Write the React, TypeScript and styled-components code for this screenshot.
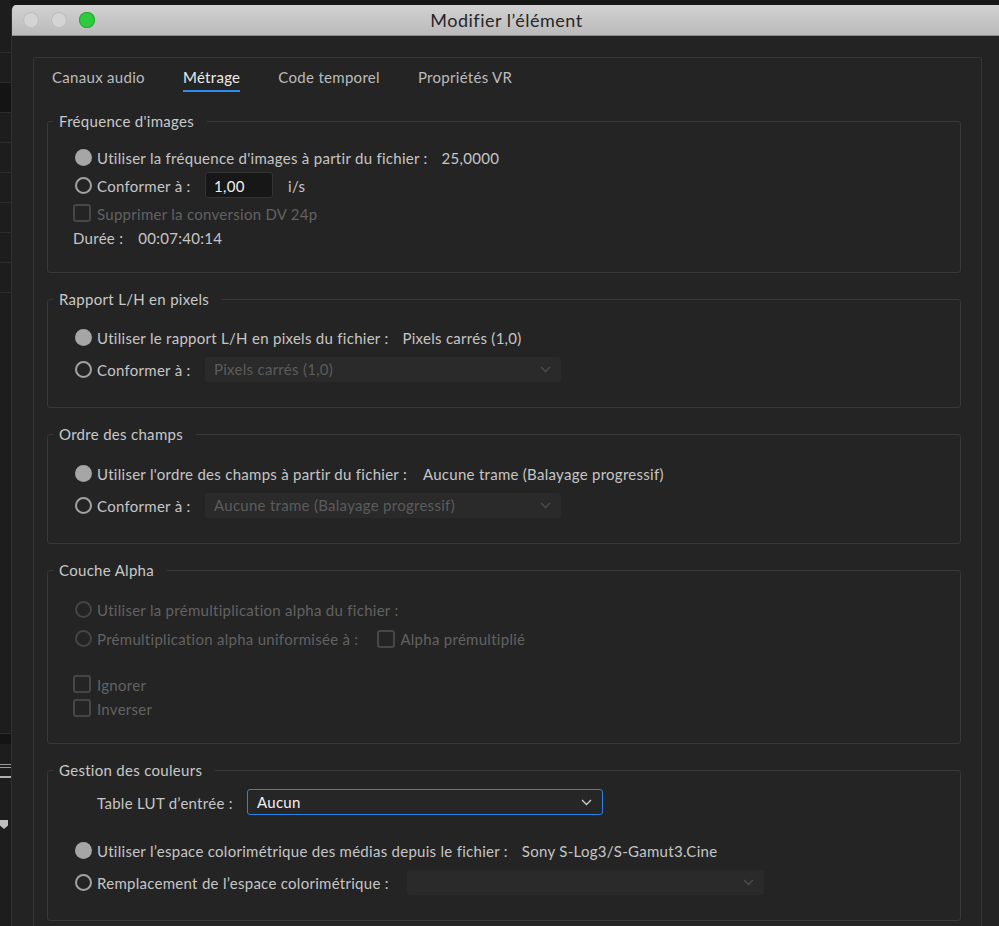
import React from 'react';
import styled, { createGlobalStyle } from 'styled-components';

const GlobalStyle = createGlobalStyle`
  html, body {
    margin: 0;
    padding: 0;
    background: #161616;
  }
  body {
    font-family: "Lato", "Noto Sans", sans-serif;
    -webkit-font-smoothing: antialiased;
  }
`;

const Page = styled.div`
  display: flex;
  height: 926px;
  overflow: hidden;
  background: #161616;
`;

const Backdrop = styled.div`
  width: 11px;
  flex: none;
  display: flex;
  flex-direction: column;
  padding-top: 52px;
  background: #1d1d1d;
`;

const BackdropRow = styled.div<{ $dark?: boolean; $h?: number }>`
  height: ${p => p.$h ?? 29}px;
  flex: none;
  border-top: 1px solid #2c2c2c;
  background: ${p => (p.$dark ? '#141414' : '#1d1d1d')};
`;

const MenuLines = styled.div`
  height: 64px;
  flex: none;
  display: flex;
  flex-direction: column;
  gap: 2px;
  padding-top: 20px;
  box-sizing: border-box;
  span {
    display: block;
    height: 1px;
    background: #9a9a9a;
  }
  span:last-child {
    margin-top: 6px;
    height: 2px;
    background: #b0b0b0;
  }
`;

const Marker = styled.div`
  width: 8px;
  height: 9px;
  margin-top: 12px;
  background: #bdbdbd;
  clip-path: polygon(0 0, 100% 0, 100% 60%, 50% 100%, 0 60%);
`;

const Window = styled.div`
  flex: 1;
  margin-top: 5px;
  display: flex;
  flex-direction: column;
  background: #232323;
  border-top-left-radius: 5px;
  overflow: hidden;
  border-left: 1px solid #2e2e2e;
`;

const TitleBar = styled.div`
  height: 31px;
  flex: none;
  position: relative;
  display: flex;
  align-items: center;
  justify-content: center;
  background: linear-gradient(#d2d2d2, #bababa);
  border-bottom: 1px solid #8c8c8c;
  box-sizing: border-box;
`;

const Lights = styled.div`
  position: absolute;
  left: 11px;
  top: 7px;
  display: flex;
  gap: 12px;
`;

const Light = styled.span<{ $color: string; $edge: string }>`
  width: 16px;
  height: 16px;
  border-radius: 50%;
  background: ${p => p.$color};
  box-shadow: inset 0 0 0 1px ${p => p.$edge};
`;

const Title = styled.div`
  font-size: 18px;
  color: #262626;
  margin-left: 2px;
  letter-spacing: 0.5px;
`;

const Body = styled.div`
  flex: 1;
  padding: 21px 0 0 21px;
`;

const Panel = styled.div`
  width: 949px;
  height: 1000px;
  box-sizing: border-box;
  border: 1px solid #353535;
  border-radius: 3px;
  background: #242424;
  padding: 0 20px 0 13px;
`;

const TabBar = styled.div`
  display: flex;
  gap: 38px;
  margin: 10px 0 0 5px;
`;

const Tab = styled.div<{ $active?: boolean }>`
  font-size: 15px;
  line-height: 18px;
  letter-spacing: 0.3px;
  padding-bottom: 4px;
  color: ${p => (p.$active ? '#ececec' : '#bcbcbc')};
  border-bottom: 2px solid ${p => (p.$active ? '#2d8ceb' : 'transparent')};
`;

const Groups = styled.div`
  display: flex;
  flex-direction: column;
  gap: 16px;
  margin-top: 19px;
`;

const Group = styled.fieldset<{ $pt: number; $pb: number }>`
  margin: 0;
  min-width: 0;
  border: 1px solid #383838;
  border-radius: 3px;
  padding: ${p => p.$pt}px 20px ${p => p.$pb}px 25px;
`;

const Legend = styled.legend`
  margin-left: -20px;
  padding: 0 13px 0 6px;
  font-size: 15px;
  line-height: 20px;
  letter-spacing: 0.3px;
  color: #c9c9c9;
`;

const Row = styled.div<{ $h: number; $indent?: number }>`
  height: ${p => p.$h}px;
  display: flex;
  align-items: center;
  padding-left: ${p => p.$indent ?? 0}px;
  font-size: 15px;
  letter-spacing: 0.28px;
  color: #c6c6c6;
  white-space: nowrap;
  span {
    padding-top: 1px;
  }
`;

const Radio = styled.i<{ $checked?: boolean; $disabled?: boolean }>`
  width: 17px;
  height: 17px;
  flex: none;
  box-sizing: border-box;
  border-radius: 50%;
  margin: 0 5px 0 2px;
  background: ${p => (p.$checked ? '#a6a6a6' : 'transparent')};
  border: ${p => (p.$checked ? 'none' : `2px solid ${p.$disabled ? '#454545' : '#a2a2a2'}`)};
`;

const Check = styled.i<{ $gap?: number; $ml?: number }>`
  width: 18px;
  height: 18px;
  flex: none;
  box-sizing: border-box;
  border: 2px solid #464646;
  border-radius: 3px;
  margin-left: ${p => p.$ml ?? 0}px;
  margin-right: ${p => p.$gap ?? 6}px;
`;

const Label = styled.span<{ $dim?: boolean; $w?: number }>`
  color: ${p => (p.$dim ? '#626262' : '#c6c6c6')};
  ${p => (p.$w ? `width: ${p.$w}px; flex: none;` : '')}
`;

const Value = styled.span<{ $ml?: number }>`
  margin-left: ${p => p.$ml ?? 14}px;
  color: #c6c6c6;
`;

const NumberBox = styled.div`
  width: 68px;
  height: 26px;
  box-sizing: border-box;
  background: #171717;
  border: 1px solid #333;
  border-radius: 3px;
  color: #f0f0f0;
  font-size: 15px;
  line-height: 26px;
  padding-left: 8px;
`;

const Unit = styled.span`
  margin-left: 15px;
`;

const Select = styled.div<{ $w: number; $active?: boolean }>`
  width: ${p => p.$w}px;
  height: ${p => (p.$active ? 26 : 25)}px;
  box-sizing: border-box;
  display: flex;
  align-items: center;
  justify-content: space-between;
  padding: 0 10px 0 9px;
  border-radius: 3px;
  font-size: 15px;
  background: ${p => (p.$active ? '#262626' : '#2a2a2a')};
  border: ${p => (p.$active ? '1.5px solid #2a82e6' : 'none')};
  color: ${p => (p.$active ? '#f2f2f2' : '#5c5c5c')};
  svg {
    flex: none;
  }
`;

const Chevron = ({ color }: { color: string }) => (
  <svg width="11" height="7" viewBox="0 0 11 7">
    <path d="M1 1l4.5 4.5L10 1" fill="none" stroke={color} strokeWidth="1.3" />
  </svg>
);

const Spacer = styled.div<{ $h: number }>`
  height: ${p => p.$h}px;
`;

export default function App() {
  return (
    <>
      <GlobalStyle />
      <Page>
        <Backdrop>
          <BackdropRow />
          <BackdropRow $dark />
          <BackdropRow />
          <BackdropRow />
          <BackdropRow />
          <BackdropRow />
          <BackdropRow />
          <BackdropRow />
          <BackdropRow $h={440} />
          <BackdropRow $dark $h={10} />
          <MenuLines>
            <span />
            <span />
            <span />
          </MenuLines>
          <Marker />
        </Backdrop>
        <Window>
          <TitleBar>
            <Lights>
              <Light $color="#d4d4d4" $edge="#bcbcbc" />
              <Light $color="#d4d4d4" $edge="#bcbcbc" />
              <Light $color="#2ecb41" $edge="#22a833" />
            </Lights>
            <Title>Modifier l’élément</Title>
          </TitleBar>
          <Body>
            <Panel>
              <TabBar>
                <Tab>Canaux audio</Tab>
                <Tab $active>Métrage</Tab>
                <Tab>Code temporel</Tab>
                <Tab>Propriétés VR</Tab>
              </TabBar>
              <Groups>
                <Group $pt={12} $pb={25}>
                  <Legend>Fréquence d'images</Legend>
                  <Row $h={28}>
                    <Radio $checked />
                    <Label>Utiliser la fréquence d'images à partir du fichier :</Label>
                    <Value>25,0000</Value>
                  </Row>
                  <Row $h={28}>
                    <Radio />
                    <Label $w={108}>Conformer à :</Label>
                    <NumberBox>1,00</NumberBox>
                    <Unit>i/s</Unit>
                  </Row>
                  <Row $h={28}>
                    <Check />
                    <Label $dim>Supprimer la conversion DV 24p</Label>
                  </Row>
                  <Row $h={20}>
                    <Label>Durée :</Label>
                    <Value $ml={15}>00:07:40:14</Value>
                  </Row>
                </Group>

                <Group $pt={12} $pb={22}>
                  <Legend>Rapport L/H en pixels</Legend>
                  <Row $h={32}>
                    <Radio $checked />
                    <Label>Utiliser le rapport L/H en pixels du fichier :</Label>
                    <Value>Pixels carrés (1,0)</Value>
                  </Row>
                  <Row $h={32}>
                    <Radio />
                    <Label $w={108}>Conformer à :</Label>
                    <Select $w={356}>
                      Pixels carrés (1,0)
                      <Chevron color="#4e4e4e" />
                    </Select>
                  </Row>
                </Group>

                <Group $pt={13} $pb={22}>
                  <Legend>Ordre des champs</Legend>
                  <Row $h={32}>
                    <Radio $checked />
                    <Label>Utiliser l'ordre des champs à partir du fichier :</Label>
                    <Value $ml={16}>Aucune trame (Balayage progressif)</Value>
                  </Row>
                  <Row $h={32}>
                    <Radio />
                    <Label $w={108}>Conformer à :</Label>
                    <Select $w={356}>
                      Aucune trame (Balayage progressif)
                      <Chevron color="#4e4e4e" />
                    </Select>
                  </Row>
                </Group>

                <Group $pt={15} $pb={23}>
                  <Legend>Couche Alpha</Legend>
                  <Row $h={29}>
                    <Radio $disabled />
                    <Label $dim>Utiliser la prémultiplication alpha du fichier :</Label>
                  </Row>
                  <Row $h={29}>
                    <Radio $disabled />
                    <Label $dim>Prémultiplication alpha uniformisée à :</Label>
                    <Check $ml={19} $gap={5} />
                    <Label $dim>Alpha prémultiplié</Label>
                  </Row>
                  <Spacer $h={19} />
                  <Row $h={24}>
                    <Check />
                    <Label $dim>Ignorer</Label>
                  </Row>
                  <Row $h={24}>
                    <Check />
                    <Label $dim>Inverser</Label>
                  </Row>
                </Group>

                <Group $pt={8} $pb={22}>
                  <Legend>Gestion des couleurs</Legend>
                  <Row $h={28} $indent={24}>
                    <Label $w={150}>Table LUT d’entrée :</Label>
                    <Select $w={356} $active>
                      Aucun
                      <Chevron color="#d0d0d0" />
                    </Select>
                  </Row>
                  <Spacer $h={18} />
                  <Row $h={32}>
                    <Radio $checked />
                    <Label>Utiliser l’espace colorimétrique des médias depuis le fichier :</Label>
                    <Value>Sony S-Log3/S-Gamut3.Cine</Value>
                  </Row>
                  <Row $h={32}>
                    <Radio />
                    <Label $w={310}>Remplacement de l’espace colorimétrique :</Label>
                    <Select $w={357}>
                      <i />
                      <Chevron color="#4e4e4e" />
                    </Select>
                  </Row>
                </Group>
              </Groups>
            </Panel>
          </Body>
        </Window>
      </Page>
    </>
  );
}
